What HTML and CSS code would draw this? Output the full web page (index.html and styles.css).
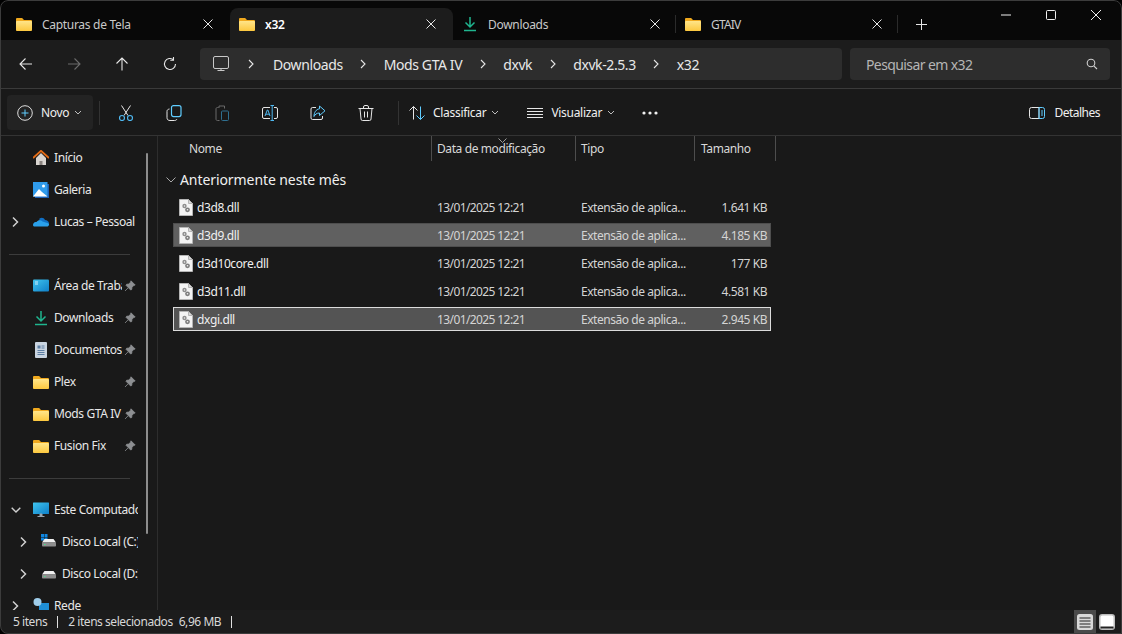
FILE: index.html
```html
<!DOCTYPE html>
<html lang="pt-BR">
<head>
<meta charset="utf-8">
<title>x32 - Explorador de Arquivos</title>
<link rel="stylesheet" href="styles.css">
</head>
<body>
<svg class="defs" aria-hidden="true">
  <defs>
    <linearGradient id="fg" x1="0" y1="0" x2="0" y2="1"><stop offset="0" stop-color="#ffe58a"/><stop offset="1" stop-color="#fcc83f"/></linearGradient>
    <linearGradient id="mon" x1="0" y1="0" x2="1" y2="1"><stop offset="0" stop-color="#3fc4ee"/><stop offset="1" stop-color="#0f7fc8"/></linearGradient>
    <symbol id="folder" viewBox="0 0 16 16"><path d="M0 3.2C0 2.5.5 2 1.2 2h4.4c.4 0 .7.1 1 .4L8 4h6.8c.7 0 1.2.5 1.2 1.2v8.6c0 .7-.5 1.2-1.2 1.2H1.2C.5 15 0 14.500 0 13.800z" fill="#f0a91e"/><path d="M0 6.200C0 5.500.5 5 1.200 5h13.600c.7 0 1.200.5 1.200 1.200v7.600c0 .7-.5 1.200-1.200 1.200H1.200C.5 15 0 14.500 0 13.800z" fill="url(#fg)"/></symbol>
    <symbol id="dl" viewBox="0 0 16 16"><path d="M8 1v9.500M3.500 6.500 8 11l4.500-4.500" fill="none" stroke="#1fb58f" stroke-width="1.500"/><path d="M2 14.500h12" stroke="#1fb58f" stroke-width="1.500"/></symbol>
    <symbol id="pin" viewBox="0 0 12 12"><path d="M7 .8 11.200 5 9.800 5.400 8 7.300 7.700 9.500 6.700 10 2 5.300 2.600 4.300 4.700 4 6.600 2.200zM4 7.900 1 11" fill="#8d8f92" stroke="#8d8f92" stroke-width=".8"/></symbol>
    <symbol id="chev" viewBox="0 0 8 12"><path d="M2 1.500 6.500 6 2 10.500" fill="none" stroke="#cfcfcf" stroke-width="1.500"/></symbol>
    <symbol id="chevthin" viewBox="0 0 8 12"><path d="M2 2 6 6 2 10" fill="none" stroke="#e6e6e6" stroke-width="1.100"/></symbol>
    <symbol id="down" viewBox="0 0 8 5"><path d="M1 1 4 4 7 1" fill="none" stroke="#bdbdbd"/></symbol>
    <symbol id="dll" viewBox="0 0 14 17"><path d="M.5.5h9L13.500 4.500v12H.5z" fill="#f4f4f4" stroke="#b5b5b5"/><path d="M9.500.5v4h4z" fill="#d8d8d8" stroke="#b5b5b5"/><circle cx="5.500" cy="7" r="2.200" fill="#8f8f8f"/><circle cx="8.500" cy="10.800" r="2.400" fill="#7d7d7d"/><circle cx="5.500" cy="7" r=".7" fill="#f4f4f4"/><circle cx="8.500" cy="10.800" r=".8" fill="#f4f4f4"/></symbol>
  </defs>
</svg>

<div class="window">
  <header class="tabbar">
    <div class="tab tab-first">
      <svg class="ic16"><use href="#folder"/></svg><span class="tab-label">Capturas de Tela</span>
      <svg class="tab-x" viewBox="0 0 10 10"><path d="M.5.5l9 9M9.500.5l-9 9"/></svg>
    </div>
    <div class="tab tab-active">
      <svg class="ic16"><use href="#folder"/></svg><span class="tab-label">x32</span>
      <svg class="tab-x" viewBox="0 0 10 10"><path d="M.5.5l9 9M9.500.5l-9 9"/></svg>
    </div>
    <div class="tab tab-dl">
      <svg class="ic16"><use href="#dl"/></svg><span class="tab-label">Downloads</span>
      <svg class="tab-x" viewBox="0 0 10 10"><path d="M.5.5l9 9M9.500.5l-9 9"/></svg>
    </div>
    <div class="tab tab-gta">
      <svg class="ic16"><use href="#folder"/></svg><span class="tab-label">GTAIV</span>
      <svg class="tab-x" viewBox="0 0 10 10"><path d="M.5.5l9 9M9.500.5l-9 9"/></svg>
    </div>
    <svg class="tab-plus" viewBox="0 0 11 11"><path d="M5.500 0v11M0 5.500h11"/></svg>
    <div class="winctl">
      <svg class="wc" viewBox="0 0 10 10"><path d="M0 5h10"/></svg>
      <svg class="wc" viewBox="0 0 10 10"><rect x=".5" y=".5" width="9" height="9" rx="1"/></svg>
      <svg class="wc" viewBox="0 0 10 10"><path d="M0 0l10 10M10 0 0 10"/></svg>
    </div>
  </header>

  <nav class="navbar">
    <div class="navbtns">
      <svg class="navic" viewBox="0 0 16 16"><path d="M14 8H2M7.500 2.500 2 8l5.500 5.500"/></svg>
      <svg class="navic navic-off" viewBox="0 0 16 16"><path d="M2 8h12M8.500 2.500 14 8l-5.500 5.500"/></svg>
      <svg class="navic" viewBox="0 0 16 16"><path d="M8 14.500V2M2.500 7.500 8 2l5.500 5.500"/></svg>
      <svg class="navic" viewBox="0 0 16 16"><path d="M13.500 8a5.500 5.500 0 1 1-1.800-4.100M11.500 1v3.200H8.300"/></svg>
    </div>
    <div class="address">
      <svg class="addr-pc" viewBox="0 0 16 16"><rect x=".5" y=".5" width="15" height="12" rx="1.500"/><path d="M8 12.500v2M4.500 14.500h7"/></svg>
      <svg class="crumb-sep crumb-sep-first"><use href="#chevthin"/></svg>
      <span class="crumb">Downloads</span>
      <svg class="crumb-sep"><use href="#chevthin"/></svg>
      <span class="crumb">Mods GTA IV</span>
      <svg class="crumb-sep"><use href="#chevthin"/></svg>
      <span class="crumb">dxvk</span>
      <svg class="crumb-sep"><use href="#chevthin"/></svg>
      <span class="crumb">dxvk-2.5.3</span>
      <svg class="crumb-sep"><use href="#chevthin"/></svg>
      <span class="crumb">x32</span>
    </div>
    <div class="search">
      <span class="search-txt">Pesquisar em x32</span>
      <svg class="search-ic" viewBox="0 0 12 12"><circle cx="5" cy="5" r="3.800"/><path d="M7.800 7.800 11 11"/></svg>
    </div>
  </nav>

  <section class="toolbar">
    <button class="novo">
      <svg class="tb-ic" viewBox="0 0 16 16"><circle cx="8" cy="8" r="7.300" fill="none" stroke="#dedede"/><path d="M8 4.500v7M4.500 8h7" stroke="#60cdff" fill="none"/></svg>
      <span>Novo</span>
      <svg class="dd"><use href="#down"/></svg>
    </button>
    <i class="tb-sep"></i>
    <div class="tb-icons">
      <svg class="tb-ic" viewBox="0 0 16 16"><path d="M3.500.5 10 10.500M12.500.5 6 10.500" fill="none" stroke="#e6e6e6"/><circle cx="4" cy="13" r="2.500" fill="none" stroke="#4fb8f0" stroke-width="1.200"/><circle cx="12" cy="13" r="2.500" fill="none" stroke="#4fb8f0" stroke-width="1.200"/></svg>
      <svg class="tb-ic" viewBox="0 0 16 16"><rect x="5.500" y=".6" width="9.500" height="11" rx="2" fill="none" stroke="#60cdff" stroke-width="1.200"/><path d="M3.500 4C1.800 4.300 1 5 1 6.500v6C1 14.500 2 15.500 4 15.500h4.500c1.300 0 2-.5 2.500-1.500" fill="none" stroke="#e6e6e6"/></svg>
      <svg class="tb-ic" viewBox="0 0 16 16"><path d="M4.500 2.500H3.500c-1 0-1.500.5-1.500 1.500v10c0 1 .5 1.500 1.500 1.500H5.500M5 1h5.500v2.500M5 1v2" fill="none" stroke="#6a6a6a"/><rect x="7.500" y="6" width="7" height="9.500" rx="1" fill="none" stroke="#2f6f8f"/></svg>
      <svg class="tb-ic" viewBox="0 0 16 16"><path d="M8 2.500H2A1.500 1.500 0 0 0 .5 4v8A1.500 1.500 0 0 0 2 13.500h6M12 2.500h2A1.500 1.500 0 0 1 15.500 4v8a1.500 1.500 0 0 1-1.500 1.500h-2" fill="none" stroke="#e6e6e6"/><path d="M3 11 5.300 5h.6L8 11M3.800 9.200h3.600M8.500 .5h3.500M10.200 .5v15M8.500 15.500h3.500" fill="none" stroke="#4fb8f0"/></svg>
      <svg class="tb-ic" viewBox="0 0 16 16"><path d="M6 2.500H2.500A1.500 1.500 0 0 0 1 4v9a1.500 1.500 0 0 0 1.500 1.500H11a1.500 1.500 0 0 0 1.500-1.500v-2" fill="none" stroke="#e6e6e6"/><path d="M9.500 1 15 5.800 9.500 10.500V8C6.500 8 5 9.500 4 11.500 4 7.500 6 4.300 9.500 3.800z" fill="none" stroke="#60cdff"/></svg>
      <svg class="tb-ic" viewBox="0 0 16 16"><path d="M.5 3.500h15M5.500 3.500V2a1.500 1.500 0 0 1 1.500-1.500h2A1.500 1.500 0 0 1 10.500 2v1.500M2 3.500l1 10.500a1.500 1.500 0 0 0 1.500 1.500h7A1.500 1.500 0 0 0 13 14l1-10.500M6.500 6.500v6M9.500 6.500v6" fill="none" stroke="#e6e6e6"/></svg>
    </div>
    <i class="tb-sep"></i>
    <div class="tb-menu tb-sort">
      <svg class="tb-ic" viewBox="0 0 16 16"><path d="M4.500 14.500V1.500M.5 5.500l4-4 4 4" fill="none" stroke="#e6e6e6"/><path d="M11.500 1.500v13M7.500 10.500l4 4 4-4" fill="none" stroke="#60cdff"/></svg>
      <span>Classificar</span>
      <svg class="dd"><use href="#down"/></svg>
    </div>
    <div class="tb-menu tb-view">
      <svg class="tb-ic" viewBox="0 0 16 16"><path d="M0 3.500h16M0 6.500h16M0 9.500h16M0 12.500h16" fill="none" stroke="#e6e6e6"/></svg>
      <span>Visualizar</span>
      <svg class="dd"><use href="#down"/></svg>
    </div>
    <svg class="more" viewBox="0 0 16 4"><circle cx="2" cy="2" r="1.600"/><circle cx="8" cy="2" r="1.600"/><circle cx="14" cy="2" r="1.600"/></svg>
    <div class="tb-menu tb-details">
      <svg class="tb-ic" viewBox="0 0 16 16"><path d="M10 2.500H2.500a2 2 0 0 0-2 2v7a2 2 0 0 0 2 2H10z" fill="none" stroke="#e6e6e6"/><path d="M10 2.500h3.500a2 2 0 0 1 2 2v7a2 2 0 0 1-2 2H10zM12 6h2M12 8h2M12 10h2" fill="none" stroke="#60cdff"/></svg>
      <span>Detalhes</span>
    </div>
  </section>

  <div class="body">
    <aside class="sidebar">
      <div class="side-row">
        <svg class="side-ic" viewBox="0 0 16 16"><path d="M3 8v7h10V8L8 3z" fill="#d9d5d0"/><path d="M6.500 15v-4h3v4z" fill="#8a8480"/><path d="M0 8 8 .8 16 8" fill="none" stroke="#e36b16" stroke-width="1.800"/></svg>
        <span class="side-txt">Início</span>
      </div>
      <div class="side-row">
        <svg class="side-ic" viewBox="0 0 16 16"><rect x="2" y="2" width="14" height="14" fill="#1b5fb5"/><rect width="14.500" height="14.500" fill="#2f9bec"/><path d="M0 14.500 6 7l3 3 5.500 4.500z" fill="#fff"/><circle cx="10.500" cy="4" r="1.500" fill="#fff"/></svg>
        <span class="side-txt">Galeria</span>
      </div>
      <div class="side-row">
        <svg class="side-chev"><use href="#chev"/></svg>
        <svg class="side-ic" viewBox="0 0 16 16"><path d="M6.500 4.500c2-1.500 4.500-.8 5.500 1.500 2 0 4 1.500 4 3.500H6z" fill="#0f6fc4"/><path d="M0 11c0-2 1.500-3.500 3.500-3 1.500-2 4-2.500 6-.5L16 9.500c.3 1.700-.7 3-2 3H2c-1.200 0-2-.5-2-1.500z" fill="#2aa0ea"/></svg>
        <span class="side-txt">Lucas – Pessoal</span>
      </div>
      <div class="side-div"></div>
      <div class="side-row">
        <svg class="side-ic" viewBox="0 0 16 16"><rect y="1.500" width="16" height="12" rx="1" fill="url(#mon)"/><path d="M2 4h3M2 6h3" stroke="#cdefff"/></svg>
        <span class="side-txt side-pinned">Área de Trabalho</span>
        <svg class="pin"><use href="#pin"/></svg>
      </div>
      <div class="side-row">
        <svg class="side-ic"><use href="#dl"/></svg>
        <span class="side-txt side-pinned">Downloads</span>
        <svg class="pin"><use href="#pin"/></svg>
      </div>
      <div class="side-row">
        <svg class="side-ic" viewBox="0 0 16 16"><rect x="2" width="12" height="16" rx="1" fill="#c9d4e0"/><path d="M4.500 3.500h3v3h-3z" fill="#5c7ea3"/><path d="M8.500 4h3M8.500 6h3M4.500 8.500h7M4.500 10.500h7M4.500 12.500h7" stroke="#5c7ea3"/></svg>
        <span class="side-txt side-pinned">Documentos</span>
        <svg class="pin"><use href="#pin"/></svg>
      </div>
      <div class="side-row">
        <svg class="side-ic"><use href="#folder"/></svg>
        <span class="side-txt side-pinned">Plex</span>
        <svg class="pin"><use href="#pin"/></svg>
      </div>
      <div class="side-row">
        <svg class="side-ic"><use href="#folder"/></svg>
        <span class="side-txt side-pinned">Mods GTA IV</span>
        <svg class="pin"><use href="#pin"/></svg>
      </div>
      <div class="side-row">
        <svg class="side-ic"><use href="#folder"/></svg>
        <span class="side-txt side-pinned">Fusion Fix</span>
        <svg class="pin"><use href="#pin"/></svg>
      </div>
      <div class="side-div"></div>
      <div class="side-row">
        <svg class="side-chevd" viewBox="0 0 10 6"><path d="M.7.700 5 5 9.300.700" fill="none" stroke="#cfcfcf" stroke-width="1.400"/></svg>
        <svg class="side-ic" viewBox="0 0 16 16"><rect y=".5" width="16" height="11.500" rx=".5" fill="url(#mon)"/><path d="M7 12h2v2H7zM4.500 14.500h7" fill="#9aa4ad" stroke="#9aa4ad"/></svg>
        <span class="side-txt">Este Computador</span>
      </div>
      <div class="side-row side-sub">
        <svg class="side-chev"><use href="#chev"/></svg>
        <svg class="side-ic" viewBox="0 0 16 16"><path d="M0 0h3v3H0zM3.500 0h3v3h-3zM0 3.500h3v3H0zM3.500 3.500h3v3h-3z" fill="#0f86e0"/><path d="M1 8.500 3.500 5h9L15 8.500z" fill="#f0f0f0"/><rect x="1" y="8.500" width="14" height="4" rx=".8" fill="#8e8e8e"/><path d="M3 10.500h1.500" stroke="#4be08a"/></svg>
        <span class="side-txt side-txt-sub">Disco Local (C:)</span>
      </div>
      <div class="side-row side-sub">
        <svg class="side-chev"><use href="#chev"/></svg>
        <svg class="side-ic" viewBox="0 0 16 16"><path d="M1 8.500 3.500 5h9L15 8.500z" fill="#f0f0f0"/><rect x="1" y="8.500" width="14" height="4" rx=".8" fill="#8e8e8e"/><path d="M3 10.500h1.500" stroke="#4be08a"/></svg>
        <span class="side-txt side-txt-sub">Disco Local (D:)</span>
      </div>
      <div class="side-row">
        <svg class="side-chev"><use href="#chev"/></svg>
        <svg class="side-ic" viewBox="0 0 16 16"><path d="M6 5h10v11H6z" fill="#1f8fd6"/><circle cx="4.500" cy="4" r="4" fill="#9fcdea"/></svg>
        <span class="side-txt">Rede</span>
      </div>
      <div class="scrollthumb"></div>
    </aside>

    <main class="main">
      <div class="cols">
        <div class="col col-name">Nome</div>
        <div class="col col-date">Data de modificação</div>
        <div class="col col-type">Tipo</div>
        <div class="col col-size">Tamanho</div>
        <svg class="sort-mark" viewBox="0 0 9 5"><path d="M.5.500 4.500 4.500l4-4" fill="none" stroke="#9a9a9a"/></svg>
      </div>
      <div class="group">
        <svg class="group-chev" viewBox="0 0 10 6"><path d="M.5.500 5 5 9.500.500" fill="none" stroke="#a8a8a8"/></svg>
        <span>Anteriormente neste mês</span>
      </div>
      <div class="files">
        <div class="file">
          <span class="f-name"><svg class="f-ic"><use href="#dll"/></svg><span class="f-label">d3d8.dll</span></span><span class="f-date">13/01/2025 12:21</span><span class="f-type">Extensão de aplica...</span><span class="f-size">1.641 KB</span>
        </div>
        <div class="file file-sel">
          <span class="f-name"><svg class="f-ic"><use href="#dll"/></svg><span class="f-label">d3d9.dll</span></span><span class="f-date">13/01/2025 12:21</span><span class="f-type">Extensão de aplica...</span><span class="f-size">4.185 KB</span>
        </div>
        <div class="file">
          <span class="f-name"><svg class="f-ic"><use href="#dll"/></svg><span class="f-label">d3d10core.dll</span></span><span class="f-date">13/01/2025 12:21</span><span class="f-type">Extensão de aplica...</span><span class="f-size">177 KB</span>
        </div>
        <div class="file">
          <span class="f-name"><svg class="f-ic"><use href="#dll"/></svg><span class="f-label">d3d11.dll</span></span><span class="f-date">13/01/2025 12:21</span><span class="f-type">Extensão de aplica...</span><span class="f-size">4.581 KB</span>
        </div>
        <div class="file file-focus">
          <span class="f-name"><svg class="f-ic"><use href="#dll"/></svg><span class="f-label">dxgi.dll</span></span><span class="f-date">13/01/2025 12:21</span><span class="f-type">Extensão de aplica...</span><span class="f-size">2.945 KB</span>
        </div>
      </div>
    </main>
  </div>

  <footer class="status">
    <span class="st-a">5 itens</span><i class="st-bar"></i><span class="st-b">2 itens selecionados</span><span class="st-c">6,96 MB</span><i class="st-bar"></i>
    <div class="st-views">
      <div class="st-view st-view-on">
        <svg viewBox="0 0 16 16"><rect width="16" height="16" rx="2.500" fill="#d8d8d8"/><path d="M2.500 4h11M2.500 7h11M2.500 10h11M2.500 13h11" stroke="#222"/></svg>
      </div>
      <div class="st-view">
        <svg viewBox="0 0 16 16"><rect x=".75" y=".75" width="14.500" height="14.500" rx="2.500" fill="#fff" stroke="#bdbdbd" stroke-width="1.500"/><path d="M1.500 12.500h13v2h-13z" fill="#222"/></svg>
      </div>
    </div>
  </footer>
</div>
</body>
</html>
```

FILE: styles.css
```css
* { box-sizing: border-box; }
html, body { margin: 0; padding: 0; height: 100%; background: #000; overflow: hidden; }
body { font: 12px/16px "Noto Sans", "Open Sans", sans-serif; color: #e8e8e8; letter-spacing: -0.3px; }
.defs { position: absolute; width: 0; height: 0; }
svg { display: block; flex: none; }
.ic16 { width: 16px; height: 16px; }

.window { position: relative; width: 1122px; height: 634px; display: flex; flex-direction: column; background: #191919; overflow: hidden; border-radius: 8px 8px 0 8px; }
.window::after { content: ""; position: absolute; inset: 0; border: 1px solid #3c3c3c; border-radius: 8px 8px 0 8px; pointer-events: none; }

/* tabs */
.tabbar { height: 40px; flex: none; background: #080808; display: flex; align-items: flex-end; padding-top: 8px; position: relative; }
.tab { height: 32px; display: flex; align-items: center; flex: none; color: #c8c8c8; position: relative; }
.tab-first { width: 230px; padding-left: 16px; }
.tab-active { width: 223px; padding-left: 9px; background: #1c1c1c; border-radius: 8px 8px 0 0; color: #fff; font-weight: 600; }
.tab-dl { width: 223px; padding-left: 9px; }
.tab-dl::after, .tab-gta::after { content: ""; position: absolute; right: 0; top: 7px; width: 1px; height: 18px; background: #2b2b2b; }
.tab-gta { width: 222px; padding-left: 9px; }
.tab-gta .tab-label { letter-spacing: -0.8px; }
.tab-label { margin-left: 10px; flex: 1; padding-top: 1px; }
.tab-x { width: 10px; height: 10px; margin-right: 17px; fill: none; stroke: #e6e6e6; }
.tab-dl .tab-x { margin-right: 16px; }
.tab-gta .tab-x { margin-right: 16px; }
.tab-plus { width: 11px; height: 11px; margin: 0 0 10px 18px; fill: none; stroke: #e6e6e6; align-self: flex-end; }
.winctl { display: flex; gap: 35px; margin-left: auto; margin-right: 21px; align-self: flex-start; margin-top: 2px; }
.wc { width: 10px; height: 10px; fill: none; stroke: #f0f0f0; }

/* nav */
.navbar { height: 49px; flex: none; background: #1c1c1c; display: flex; align-items: flex-start; padding: 8px 12px 0 18px; border-bottom: 1px solid #3a3a3a; }
.navbtns { display: flex; gap: 32px; width: 182px; height: 32px; align-items: center; }
.navic { width: 16px; height: 16px; fill: none; stroke: #e6e6e6; stroke-width: 1.100; }
.navic-off { stroke: #6a6a6a; }
.address { width: 642px; height: 32px; background: #2d2d2d; border-radius: 4px; display: flex; align-items: center; padding-left: 13px; font-size: 14px; letter-spacing: -0.4px; }
.addr-pc { width: 16px; height: 16px; fill: none; stroke: #c8c8c8; }
.crumb-sep { width: 8px; height: 12px; margin: 0 16.500px; }
.crumb-sep-first { margin: 0 18px 0 18px; }
.crumb { white-space: nowrap; padding-top: 1px; }
.search { width: 260px; height: 32px; margin-left: 8px; background: #2d2d2d; border-radius: 4px; display: flex; align-items: center; justify-content: space-between; padding: 0 12px 0 16px; font-size: 14px; letter-spacing: -0.6px; color: #b5b5b5; }
.search-txt { padding-top: 1px; }
.search-ic { width: 12px; height: 12px; fill: none; stroke: #d0d0d0; stroke-width: 1.100; }

/* toolbar */
.toolbar { height: 47px; flex: none; background: #191919; display: flex; align-items: center; padding: 1px 0 0 7px; border-bottom: 1px solid #333; }
.tb-ic { width: 16px; height: 16px; }
.novo { all: unset; box-sizing: border-box; width: 86px; height: 35px; background: #232323; border-radius: 4px; display: flex; align-items: center; padding-left: 10px; color: #f0f0f0; }
.novo span { margin-left: 8px; }
.dd { width: 8px; height: 5px; margin-left: 5px; }
.tb-sep { width: 1px; height: 24px; background: #333; flex: none; margin-left: 6px; }
.tb-icons { display: flex; gap: 32px; padding-left: 18px; width: 292px; }
.tb-menu { display: flex; align-items: center; color: #f0f0f0; }
.tb-menu span { margin-left: 8px; }
.tb-menu .dd { margin-left: 5px; }
.tb-sort { margin-left: 10px; }
.tb-view { margin-left: 28px; }
.more { width: 16px; height: 4px; fill: #f0f0f0; margin-left: 27px; }
.tb-details { margin-left: auto; margin-right: 22px; letter-spacing: -0.5px; }
.tb-details span { margin-left: 9px; }

/* body */
.body { flex: 1; min-height: 0; display: flex; }
.sidebar { width: 158px; flex: none; position: relative; border-right: 1px solid #2d2d2d; padding-top: 6px; overflow: hidden; letter-spacing: -0.4px; }
.side-row { height: 32px; display: flex; align-items: center; padding-left: 33px; position: relative; }
.side-sub { padding-left: 41px; }
.side-chev { position: absolute; left: 11px; top: 10px; width: 8px; height: 12px; }
.side-chevd { position: absolute; left: 11px; top: 13px; width: 10px; height: 6px; }
.side-sub .side-chev { left: 19px; }
.side-ic { width: 16px; height: 16px; }
.side-txt { margin-left: 5px; width: 84px; white-space: nowrap; overflow: hidden; }
.side-txt-sub { width: 76px; }
.side-pinned { width: 68px; }
.pin { width: 12px; height: 12px; margin-left: 2px; }
.side-div { height: 32px; display: flex; align-items: center; padding-left: 9px; }
.side-div::before { content: ""; width: 121px; height: 1px; background: #3c3c3c; }
.scrollthumb { position: absolute; left: 146px; top: 17px; width: 2px; height: 381px; background: #8d8d8d; border-radius: 1px; }

/* list */
.main { flex: 1; min-width: 0; }
.cols { height: 26px; display: flex; position: relative; color: #d8d8d8; letter-spacing: -0.4px; }
.col { height: 25px; padding: 5px 0 0 5px; border-right: 1px solid #4d4d4d; flex: none; }
.col-name { width: 274px; padding-left: 31px; }
.col-date { width: 144px; }
.col-type { width: 119px; }
.col-size { width: 81px; padding-left: 6px; }
.sort-mark { position: absolute; left: 340px; top: 2px; width: 9px; height: 5px; }
.group { height: 33px; padding: 2px 0 0 8px; display: flex; align-items: center; gap: 4px; font-size: 14px; letter-spacing: -0.08px; color: #f0f0f0; }
.group-chev { width: 10px; height: 6px; }
.files { display: flex; flex-direction: column; gap: 4px; margin-left: 15px; width: 598px; }
.file { height: 24px; display: grid; grid-template-columns: 258px 144px 119px 77px; align-items: center; border: 1px solid transparent; margin: 0; color: #d4d4d4; }
.file > span { padding: 1px 0 0 5px; white-space: nowrap; }
.file > .f-name { display: flex; align-items: center; gap: 4px; color: #f0f0f0; letter-spacing: -0.4px; padding-top: 0; }
.f-label { padding-top: 1px; }
.file > .f-date { letter-spacing: -0.6px; }
.file > .f-type { letter-spacing: -0.45px; }
.file > .f-size { padding: 1px 5px 0 0; text-align: right; letter-spacing: -0.45px; }
.f-ic { width: 14px; height: 17px; }
.file-sel { background: #606060; border-color: #4e4e4e; }
.file-focus { background: #545454; border-color: #dcdcdc; }

/* status */
.status { height: 24px; flex: none; background: #1c1c1c; display: flex; align-items: center; padding-left: 13px; color: #d8d8d8; position: relative; letter-spacing: -0.45px; }
.st-bar { width: 1px; height: 12px; background: #e0e0e0; flex: none; margin: 0 10px; }
.st-c { margin-left: 6px; }
.st-views { margin-left: auto; margin-right: 4px; display: flex; align-self: stretch; }
.st-view { width: 22px; display: flex; align-items: center; justify-content: center; }
.st-view svg { width: 16px; height: 16px; }
.st-view-on { background: #4a4a4a; }
```
